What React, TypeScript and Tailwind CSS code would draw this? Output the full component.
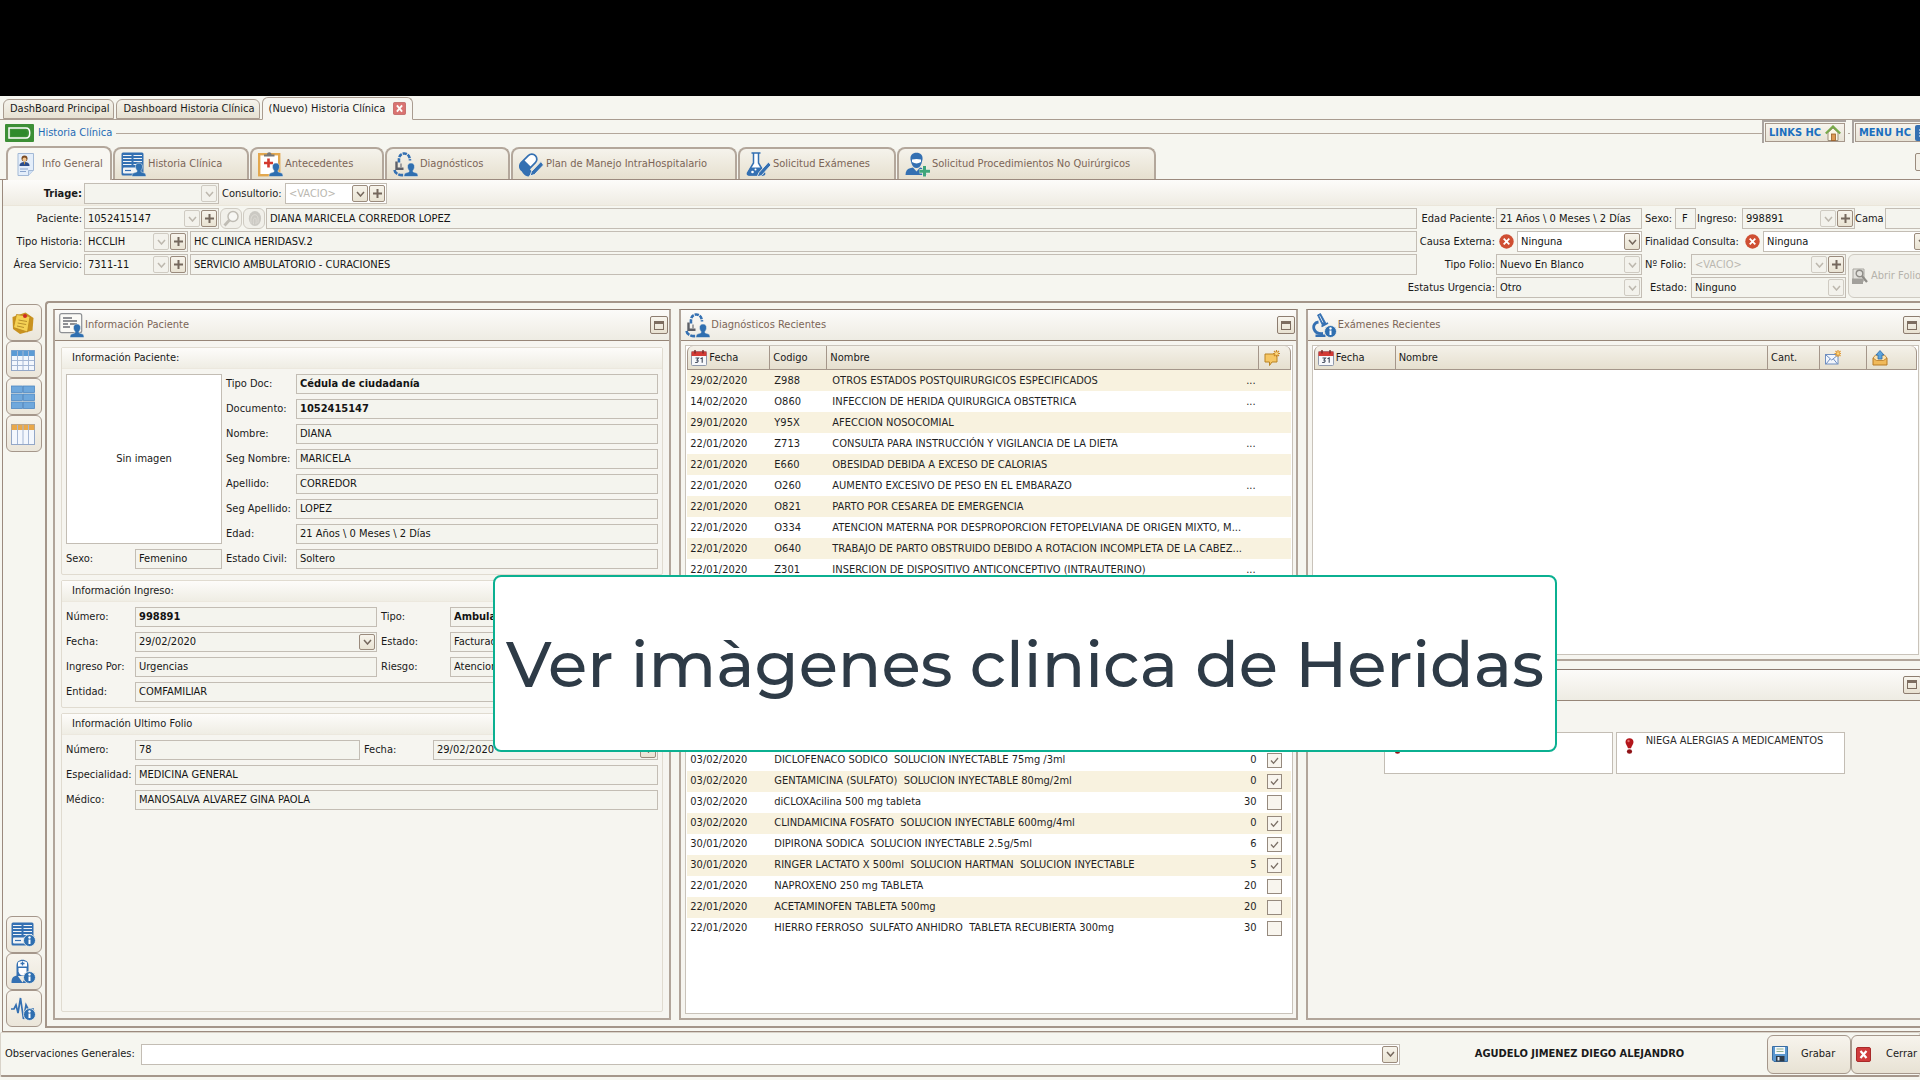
import React, { useId } from "react";
import type { ReactNode } from "react";

const BLUE = "#3470b2";

/* ---------- icons ---------- */

function Person({ x = 0, y = 0, s = 1 }: { x?: number; y?: number; s?: number }) {
  return (
    <g transform={`translate(${x} ${y}) scale(${s})`} fill="#2f6fb0" stroke="#f4f2ea" strokeWidth="0.5">
      <path d="M6 0c2.600 0 3.800 1.800 3.500 4.200-.1 1.500-.8 2.600-1.500 3.400v1.200l3.600 1.300c1 .5 1.400 1.400 1.400 3.400H-1c0-2 .4-2.900 1.400-3.400L4 8.800V7.600C3.300 6.800 2.600 5.700 2.500 4.200 2.200 1.800 3.400 0 6 0Z" />
    </g>
  );
}

function InfoBadge({ x, y }: { x: number; y: number }) {
  return (
    <g transform={`translate(${x} ${y})`}>
      <circle cx="6" cy="6" r="6" fill="#2f6fb0" stroke="#f4f2ea" strokeWidth="0.8" />
      <circle cx="6" cy="3" r="1.200" fill="#fff" />
      <path d="M4.600 5H7v4.600H5V5Z" fill="#fff" />
    </g>
  );
}

const icon25 = "h-[25px] w-[25px] shrink-0";

function IdDocIcon() {
  return (
    <svg viewBox="0 0 20 25" className="h-[25px] w-5 shrink-0" aria-hidden="true">
      <path d="M2 1.500h15.500V18l-5 5.500H2Z" fill="#e4eefa" stroke="#a3b9d6" />
      <circle cx="8.500" cy="6.500" r="3" fill="#7a4a22" />
      <circle cx="8.500" cy="7.500" r="2" fill="#f2c58e" />
      <path d="M3.500 14c0-3 2-4 5-4s5 1 5 4Z" fill="#2c4d8c" />
      <path d="M7.700 10h1.600l-.8 3Z" fill="#d9a13c" />
      <path d="M4 17h8M4 19.500h6" stroke="#8aa4cc" />
      <path d="M12.500 23.500v-5h5" fill="#cfe0f4" stroke="#a3b9d6" />
    </svg>
  );
}

function Ledger() {
  return (
    <g>
      <rect x="0.500" y="0.500" width="22" height="23" rx="1.500" fill={BLUE} />
      <path d="M2 3.500h8.500M2 6.500h8.500M2 9.500h8.500M2 12.500h8.500M12.500 3.500H21M12.500 6.500H21M12.500 9.500H21M12.500 12.500H21" stroke="#f1f3f5" strokeWidth="1.100" />
      <rect x="2" y="15.500" width="14" height="6" rx="1" fill="#f1f3f5" />
      <path d="M4 18.500h6" stroke={BLUE} strokeWidth="1.200" />
    </g>
  );
}

function HistoryIcon() {
  return (
    <svg viewBox="0 0 25 25" className={icon25} aria-hidden="true">
      <Ledger />
      <Person x={12} y={11} />
    </svg>
  );
}

function ClipboardIcon() {
  return (
    <svg viewBox="0 0 25 25" className={icon25} aria-hidden="true">
      <rect x="1.200" y="2.200" width="20" height="21" fill="#fff" stroke="#e3a84f" strokeWidth="2.400" />
      <path d="M6 4.500V2.500h3C9 1 10 .3 11.200.3S13.500 1 13.500 2.500h3v2Z" fill="#777" />
      <path d="M10.500 6.500v9M6 11h9" stroke="#d3382c" strokeWidth="2.600" />
      <Person x={12} y={11} />
    </svg>
  );
}

function DiagnosisIcon() {
  return (
    <svg viewBox="0 0 25 25" className={icon25} aria-hidden="true">
      <path d="M6 10.500C5.500 5 7 1.800 10.800 1.500S16.800 4 17 8.500" fill="none" stroke={BLUE} strokeWidth="2.600" strokeDasharray="4.200 1" />
      <path d="M3.500 9.500v7.300h7" fill="none" stroke="#5d5f66" strokeWidth="2.400" />
      <path d="M8 11.500v4" stroke="#8d8f93" strokeWidth="1.600" />
      <path d="M1.500 18c.5 3.800 5 5.500 9.500 5" fill="none" stroke={BLUE} strokeWidth="2.600" strokeDasharray="5 1" />
      <Person x={12} y={11} />
    </svg>
  );
}

function PillIcon() {
  return (
    <svg viewBox="0 0 25 25" className={icon25} aria-hidden="true">
      <g transform="rotate(-45 10 10)">
        <rect x="-1" y="5" width="20" height="10" rx="5" fill="#fff" stroke={BLUE} strokeWidth="1.700" />
        <path d="M8 5H4a5 5 0 0 0 0 10h4Z" fill={BLUE} />
      </g>
      <path d="M2 17c1 4 3.500 7 7.500 7.500l4-4-4-5Z" fill={BLUE} />
      <path d="m22 9.500-9.500 10-1.500 4.500 4.500-1.500 9-9.500Z" fill={BLUE} stroke="#f1efe6" strokeWidth="0.900" />
    </svg>
  );
}

function FlaskIcon() {
  return (
    <svg viewBox="0 0 25 25" className={icon25} aria-hidden="true">
      <path d="M5.500 1h9M7.500 1v10L1.500 21c-.3 1.300.3 2 1.500 2h14c1.200 0 1.800-.7 1.500-2L12.500 11V1" fill="#fff" stroke={BLUE} strokeWidth="1.500" />
      <path d="M4.500 15.500h11l3 6-2 2h-14l-1.500-2Z" fill={BLUE} />
      <circle cx="6.500" cy="20" r="1.300" fill="#fff" />
      <circle cx="9.500" cy="17.500" r="1" fill="#fff" />
      <path d="m22.500 10-9.500 10.500-2 4.500 4.500-1.500L25 13Z" fill={BLUE} stroke="#f1efe6" strokeWidth="0.900" />
    </svg>
  );
}

function SurgeonIcon() {
  return (
    <svg viewBox="0 0 25 25" className={icon25} aria-hidden="true">
      <path d="M5.500 7.500C5 3 7.500.7 11.500.7S18 3 17.500 7.500l-1 4c-.8 2.500-2.500 4.500-5 4.500s-4.200-2-5-4.500Z" fill={BLUE} />
      <path d="M7 7.500c3-.8 6-.8 9 0v2.600c-1.500.9-3 1.400-4.500 1.400S8.500 11 7 10.100Z" fill="#fff" />
      <path d="M.5 23c0-4 1.500-6 4.500-6.800l3-.8 3.500 4 3.500-4 3 .8c3 .8 4 2.800 4 6.800Z" fill={BLUE} />
      <path d="M19.500 14v10.500M14.500 19.200H25" stroke="#f1efe6" strokeWidth="4.600" />
      <path d="M19.500 14v10.500M14.500 19.200H25" stroke="#3fa67a" strokeWidth="3" />
    </svg>
  );
}

function NurseIcon() {
  return (
    <svg viewBox="0 0 25 25" className={icon25} aria-hidden="true">
      <path d="M5.500 17V6.500C5.500 3 8 .8 11.500.8S17.500 3 17.500 6.500V17Z" fill={BLUE} />
      <path d="M7 3.500C9.500 1.500 13.500 1.500 16 3.500v4H7Z" fill="#fff" />
      <path d="M11.500 2.500v4M9.500 4.500h4" stroke={BLUE} strokeWidth="1.300" />
      <path d="M7.500 9h8v3.500c-.8 2.500-2.200 4-4 4s-3.200-1.500-4-4Z" fill="#fff" />
      <path d="M.5 24c0-5 1.500-7 6-7.500l5 7 3-5 2 5.500Z" fill={BLUE} />
      <InfoBadge x={12.500} y={12.500} />
    </svg>
  );
}

function PulseIcon() {
  return (
    <svg viewBox="0 0 25 25" className={icon25} aria-hidden="true">
      <path d="M0 13h3l2-4 2 8L9.500 2l3 21 2.500-14 2 4h6" fill="none" stroke={BLUE} strokeWidth="1.700" />
      <InfoBadge x={12.500} y={12.500} />
    </svg>
  );
}

function LedgerInfoIcon() {
  return (
    <svg viewBox="0 0 25 25" className={icon25} aria-hidden="true">
      <Ledger />
      <InfoBadge x={12.500} y={12.500} />
    </svg>
  );
}

function PatientCardIcon() {
  return (
    <svg viewBox="0 0 25 25" className={icon25} aria-hidden="true">
      <rect x="0.700" y="0.700" width="22" height="19" rx="2" fill="#fbfaf6" stroke="#8d8f93" strokeWidth="1.200" />
      <path d="M4 5h9M4 8h14M4 11h5M11 11h7M4 14h7" stroke="#6c6e74" strokeWidth="1.300" />
      <Person x={12} y={11} />
    </svg>
  );
}

function MicroscopeIcon() {
  return (
    <svg viewBox="0 0 25 25" className={icon25} aria-hidden="true">
      <path d="m5.500 2 3-1.500 5.500 10-3.500 2Z" fill={BLUE} stroke={BLUE} strokeWidth="0.800" />
      <path d="m7.500 2.500 3.500 7" stroke="#dfe7f0" strokeWidth="0.900" />
      <path d="M6.500 9C2.500 9.500 1 13 2 16s4 5 9 4.500" fill="none" stroke={BLUE} strokeWidth="2.800" />
      <path d="M3.500 24v-2.500h10V24Z" fill={BLUE} />
      <path d="M9.500 13.500 16 10" stroke={BLUE} strokeWidth="1.800" />
      <InfoBadge x={12.500} y={12.500} />
    </svg>
  );
}

function CalendarIcon() {
  return (
    <svg viewBox="0 0 16 16" className="h-4 w-4 shrink-0" aria-hidden="true">
      <rect x="0.500" y="1.500" width="15" height="14" rx="1" fill="#f7f8fb" stroke="#8f98ab" />
      <path d="M.5 1.500h15v4.500H.5Z" fill="#d33a35" />
      <path d="M4 0v3.500M12 0v3.500" stroke="#7a2522" strokeWidth="1.400" />
      <path d="M4.500 8h3l-1.500 2c1.500 0 2 2.800-1.800 2.500M9.500 8.800l1.700-.9v4.800" fill="none" stroke="#3d4658" strokeWidth="1.100" />
    </svg>
  );
}

function NoteBubbleIcon() {
  return (
    <svg viewBox="0 0 16 16" className="h-4 w-4 shrink-0" aria-hidden="true">
      <path d="M1 4h12v8H8L5.500 15.500V12H1Z" fill="#f6c765" stroke="#b98324" />
      <path d="M12.500 0v7M9 3.500h7M10 1l5 5M15 1l-5 5" stroke="#c98a2b" strokeWidth="1.200" />
      <circle cx="12.500" cy="3.500" r="1.600" fill="#ffd87a" />
    </svg>
  );
}

function MailNewIcon() {
  return (
    <svg viewBox="0 0 16 16" className="h-4 w-4 shrink-0" aria-hidden="true">
      <rect x="0.500" y="4.500" width="12.500" height="9.500" fill="#f2f6fc" stroke="#6f8fc0" />
      <path d="m1 5 5.700 5L13 5M1 14l4-5M12.500 14l-4-5" fill="none" stroke="#6f8fc0" />
      <path d="M13 0v7M9.500 3.500h7M10.500 1l5 5M15.500 1l-5 5" stroke="#e09a35" strokeWidth="1.200" />
      <circle cx="13" cy="3.500" r="1.300" fill="#ffd87a" />
    </svg>
  );
}

function OutboxIcon() {
  return (
    <svg viewBox="0 0 16 16" className="h-4 w-4 shrink-0" aria-hidden="true">
      <path d="M1 8h14v7H1Z" fill="#f0b95a" stroke="#b77a25" />
      <path d="m1 8 2.500-3h9L15 8l-3.500 2.500h-7Z" fill="#fbe2ae" stroke="#b77a25" strokeWidth="0.800" />
      <path d="m8 .5 4 4.500h-2v4H6V5H4Z" fill="#5aa3dd" stroke="#2f6aa6" strokeWidth="0.800" />
    </svg>
  );
}

function StickyIcon() {
  return (
    <svg viewBox="0 0 24 24" className="h-6 w-6" aria-hidden="true">
      <path d="m1.500 6 13-4.500L22.500 7l-1 12.500L9 23l-7-5Z" fill="#c9921f" />
      <path d="m5.500 3.500 13.500 2-2.500 15.500-14-4.500Z" fill="#f5d154" stroke="#b9851d" strokeWidth="0.800" />
      <path d="m7.500 9 8.500 1.500M6.700 12l8.500 1.500M6 15l7 1.500" stroke="#b9902d" />
      <circle cx="14" cy="5" r="2" fill="#cf2a24" />
    </svg>
  );
}

function GridIcon({ head, dense }: { head: string; dense?: boolean }) {
  return (
    <svg viewBox="0 0 24 22" className="h-[22px] w-6" aria-hidden="true">
      <rect x="0.500" y="1.500" width="23" height="20" fill="#f3f7fd" stroke="#93a7c7" />
      <rect x="0.500" y="1.500" width="23" height="5.500" fill={head} />
      <path d="M6.500 2v19M12 2v19M17.500 2v19" stroke="#a5b7d4" />
      {dense && <path d="M1 11.500h22M1 16.500h22" stroke="#a5b7d4" />}
    </svg>
  );
}

function TilesIcon() {
  return (
    <svg viewBox="0 0 24 24" className="h-6 w-6" aria-hidden="true">
      {[1, 9, 17].map((y) => (
        <g key={y} fill="#6fa8dc" stroke="#4f88c2" strokeWidth="0.800">
          <rect x="0.500" y={y} width="11" height="6.500" />
          <rect x="12.500" y={y} width="11" height="6.500" />
        </g>
      ))}
    </svg>
  );
}

function ErrorIcon() {
  return (
    <svg viewBox="0 0 15 15" className="h-[15px] w-[15px] shrink-0" aria-hidden="true">
      <circle cx="7.500" cy="7.500" r="7.200" fill="#cf4f33" />
      <path d="m4.700 4.700 5.600 5.600M10.300 4.700l-5.600 5.600" stroke="#fff" strokeWidth="1.800" />
    </svg>
  );
}

function AlertIcon() {
  return (
    <svg viewBox="0 0 9 16" className="h-4 w-[9px] shrink-0" aria-hidden="true">
      <path d="M4.500.3c2.400 0 4 1.500 4 3.800 0 2.200-1.800 3.800-2.500 6.200H3C2.300 7.900.5 6.300.5 4.100c0-2.300 1.600-3.800 4-3.800Z" fill="#b3161b" />
      <circle cx="3.500" cy="3" r="1.200" fill="#e36a68" />
      <ellipse cx="4.500" cy="13.500" rx="2.600" ry="2.200" fill="#8f1216" />
    </svg>
  );
}

function HouseIcon() {
  return (
    <svg viewBox="0 0 16 16" className="h-4 w-4" aria-hidden="true">
      <path d="M3 7.500v8h10v-8L8 3Z" fill="#fbf6e6" stroke="#9b8f7a" />
      <path d="M.8 8.500 8 1.500l7.200 7" fill="none" stroke="#78a94a" strokeWidth="2.200" />
      <rect x="6.500" y="9" width="4" height="6.500" fill="#dd9a55" stroke="#9a5e27" strokeWidth="0.800" />
    </svg>
  );
}

function FloppyIcon() {
  return (
    <svg viewBox="0 0 16 16" className="h-4 w-4" aria-hidden="true">
      <path d="M.5.500h15v15H2l-1.500-1.500Z" fill="#5a97cf" stroke="#3b6ea3" />
      <rect x="3" y="1" width="10" height="7" fill="#f6f9fc" />
      <path d="M4.500 3h7M4.500 5.500h7" stroke="#8fb08f" />
      <rect x="4" y="10" width="8.500" height="5.500" fill="#2e3b49" />
      <rect x="5.500" y="11" width="2" height="3.500" fill="#dfe6ee" />
    </svg>
  );
}

function RedCloseIcon({ className }: { className: string }) {
  return (
    <svg viewBox="0 0 15 15" className={className} aria-hidden="true">
      <rect x="0.500" y="0.500" width="14" height="14" rx="1.500" fill="#cf3b3b" stroke="#a82a2a" />
      <path d="m4.500 4 6 7M10.500 4l-6 7" stroke="#fff" strokeWidth="2.200" />
    </svg>
  );
}

function ChevronDown() {
  return (
    <svg viewBox="0 0 9 6" className="h-1.5 w-[9px]" aria-hidden="true">
      <path d="m1 1 3.500 4L8 1" fill="none" stroke="currentColor" strokeWidth="1.500" />
    </svg>
  );
}

function PlusGlyph() {
  return (
    <svg viewBox="0 0 9 9" className="h-[9px] w-[9px]" aria-hidden="true">
      <path d="M4.500 0v9M0 4.500h9" stroke="currentColor" strokeWidth="2" />
    </svg>
  );
}

/* ---------- form parts ---------- */

const miniOn =
  "flex w-4 shrink-0 items-center justify-center rounded-xs border border-[#9a8b7d] bg-linear-to-b from-[#f7f4ec] to-[#e9e3d3] text-[#75685d]";
const miniOff =
  "flex w-4 shrink-0 items-center justify-center rounded-xs border border-[#cfcbc2] bg-[#f3f2ec] text-[#bdb8ae]";

type BoxProps = {
  id?: string;
  name?: string;
  value: string;
  className?: string;
  bold?: boolean;
  faded?: boolean;
  white?: boolean;
  drop?: "on" | "off";
  plus?: boolean;
};

function Box({ id, name, value, className = "", bold, faded, white, drop, plus }: BoxProps) {
  return (
    <div className={`flex min-w-0 gap-px border border-[#c3bdb4] p-px ${white ? "bg-white" : "bg-[#f4f4ee]"} ${className}`}>
      <input
        id={id}
        aria-label={name}
        readOnly
        value={value}
        className={`min-w-0 flex-1 bg-transparent px-0.5 outline-none ${bold ? "font-bold" : ""} ${faded ? "text-[#bab7b0]" : "text-[#141414]"}`}
      />
      {drop && (
        <button type="button" aria-label="Desplegar" disabled={drop === "off"} className={drop === "on" ? miniOn : miniOff}>
          <ChevronDown />
        </button>
      )}
      {plus && (
        <button type="button" aria-label="Agregar" className={miniOn}>
          <PlusGlyph />
        </button>
      )}
    </div>
  );
}

function Choice({ id, value, className = "", enabled }: { id: string; value: string; className?: string; enabled?: boolean }) {
  return (
    <div className={`relative flex min-w-0 border border-[#c3bdb4] p-px ${enabled ? "bg-white" : "bg-[#f4f4ee]"} ${className}`}>
      <select id={id} disabled={!enabled} className="min-w-0 flex-1 appearance-none bg-transparent px-0.5 text-[#141414] opacity-100 outline-none">
        <option>{value}</option>
      </select>
      <span className={`pointer-events-none ${enabled ? miniOn : miniOff}`}>
        <ChevronDown />
      </span>
    </div>
  );
}

function Lab({ htmlFor, className = "", children }: { htmlFor: string; className?: string; children: ReactNode }) {
  return (
    <label htmlFor={htmlFor} className={`flex shrink-0 items-center whitespace-nowrap ${className}`}>
      {children}
    </label>
  );
}

/** Label and box as two neighbouring cells of the surrounding grid. */
function Pair({ label, wide, ...box }: BoxProps & { label: string; wide?: boolean }) {
  const id = useId();
  return (
    <>
      <Lab htmlFor={id} className="pl-1 first:pl-0">
        {label}
      </Lab>
      <Box id={id} {...box} className={wide ? "col-span-3" : ""} />
    </>
  );
}

/* ---------- top ---------- */

function DocTab({ label, active }: { label: string; active?: boolean }) {
  return (
    <div
      className={`flex items-center rounded-t-md border border-[#a99c90] ${
        active ? "z-10 -mb-px h-[23px] border-b-[#f6f5f0] bg-[#f7f6f1] px-1.5" : "h-5 bg-linear-to-b from-[#f5f3ec] to-[#e7e2d3] pr-1 pl-1.5"
      }`}
    >
      <button type="button" role="tab" aria-selected={!!active} className="whitespace-nowrap">
        {label}
      </button>
      {active && (
        <button type="button" aria-label="Cerrar pestaña" className="ml-2 opacity-70">
          <RedCloseIcon className="h-[13px] w-[13px]" />
        </button>
      )}
    </div>
  );
}

const sections = [
  { label: "Info General", icon: <IdDocIcon />, width: "w-[106px]", pad: "pl-2 gap-1.5", active: true },
  { label: "Historia Clínica", icon: <HistoryIcon />, width: "w-[136px]", pad: "pl-1.5 gap-0.5" },
  { label: "Antecedentes", icon: <ClipboardIcon />, width: "w-[134px]", pad: "pl-1.5 gap-0.5" },
  { label: "Diagnósticos", icon: <DiagnosisIcon />, width: "w-[125px]", pad: "pl-1.5 gap-0.5" },
  { label: "Plan de Manejo IntraHospitalario", icon: <PillIcon />, width: "w-[226px]", pad: "pl-1.5 gap-0.5" },
  { label: "Solicitud Exámenes", icon: <FlaskIcon />, width: "w-[158px]", pad: "pl-1.5 gap-0.5" },
  { label: "Solicitud Procedimientos No Quirúrgicos", icon: <SurgeonIcon />, width: "w-[259px]", pad: "pl-1.5 gap-0.5" },
];

function SectionTabs() {
  return (
    <nav role="tablist" className="flex h-[33px] items-end gap-px border-b border-[#9b8a7e] pl-1.5">
      {sections.map((s) => (
        <button
          key={s.label}
          type="button"
          role="tab"
          aria-selected={!!s.active}
          className={`flex h-8 shrink-0 items-center whitespace-nowrap rounded-t-lg border-2 border-b-0 border-[#b3a79b] text-[#7b6557] ${s.width} ${s.pad} ${
            s.active ? "z-10 -mb-px h-[34px] bg-[#f8f7f2]" : "bg-linear-to-b from-[#f5f3ec] to-[#e6e0cf]"
          }`}
        >
          {s.icon}
          {s.label}
        </button>
      ))}
      <button type="button" aria-label="Contraer" className="-mr-2.5 mb-2 ml-auto h-[18px] w-[15px] shrink-0 rounded-xs border border-[#9a8b7d] bg-[#f3f0e7]" />
    </nav>
  );
}

function PatientForm() {
  const id = useId();
  const f = (n: string) => id + n;
  const left = "w-[81px] justify-end pr-0.5";
  const right = "w-[79px] justify-end pr-px";
  return (
    <section className="pb-[3px]">
      <div className="mb-0.5 flex h-[26px] items-center border-b border-[#ebe6da] bg-linear-to-b from-[#fdfcfa] to-[#efece3] pt-0.5">
        <Lab htmlFor={f("tri")} className={`${left} font-bold`}>Triage:</Lab>
        <Box id={f("tri")} value="" drop="off" className="h-[21px] w-[135px]" />
        <Lab htmlFor={f("con")} className="w-[66px] pl-[3px]">Consultorio:</Lab>
        <Box id={f("con")} value="<VACIO>" faded white drop="on" plus className="h-[21px] w-[102px]" />
      </div>
      <div className="flex">
        <div className="flex min-w-0 flex-1 flex-col gap-0.5">
          <div className="flex h-[21px] gap-px">
            <Lab htmlFor={f("pac")} className="w-20 justify-end pr-px">Paciente:</Lab>
            <Box id={f("pac")} value="1052415147" drop="off" plus className="w-[135px]" />
            <button type="button" aria-label="Buscar" disabled className="flex w-[22px] shrink-0 items-center justify-center rounded-md border border-[#cfcbc2] bg-[#f1f0ea]">
              <svg viewBox="0 0 18 18" className="h-[18px] w-[18px] shrink-0" aria-hidden="true">
                <circle cx="11" cy="6.500" r="5" fill="#f7f7f4" stroke="#bfbcb4" strokeWidth="1.500" />
                <path d="m7.500 10-5 5.500" stroke="#bfbcb4" strokeWidth="2.800" />
              </svg>
            </button>
            <button type="button" aria-label="Huella" disabled className="flex w-[22px] shrink-0 items-center justify-center rounded-md border border-[#cfcbc2] bg-[#f1f0ea]">
              <svg viewBox="0 0 16 18" className="h-[17px] w-4 shrink-0" aria-hidden="true">
                <ellipse cx="9" cy="9" rx="6.500" ry="8" fill="#cbc9c3" />
                <path d="M5 14c-1-6 1-9 4-9s4 4 3 9M7.500 15c-.5-4 0-6.500 1.500-6.500s1.500 3 1 6.500" fill="none" stroke="#dedcd6" />
              </svg>
            </button>
            <Box name="Nombre del paciente" value="DIANA MARICELA CORREDOR LOPEZ" className="flex-1" />
          </div>
          <div className="flex h-[21px]">
            <Lab htmlFor={f("tip")} className={left}>Tipo Historia:</Lab>
            <Box id={f("tip")} value="HCCLIH" drop="off" plus className="mr-0.5 w-[104px]" />
            <Box name="Descripción de historia" value="HC CLINICA HERIDASV.2" className="flex-1" />
          </div>
          <div className="flex h-[21px]">
            <Lab htmlFor={f("are")} className={left}>Área Servicio:</Lab>
            <Box id={f("are")} value="7311-11" drop="off" plus className="mr-0.5 w-[104px]" />
            <Box name="Descripción de servicio" value="SERVICIO AMBULATORIO - CURACIONES" className="flex-1" />
          </div>
        </div>
        <div className="-mr-3 flex w-[515px] shrink-0 flex-col gap-0.5">
          <div className="flex h-[21px]">
            <Lab htmlFor={f("eda")} className={right}>Edad Paciente:</Lab>
            <Box id={f("eda")} value="21 Años \ 0 Meses \ 2 Días" className="w-[146px]" />
            <Lab htmlFor={f("sex")} className="w-[33px] pl-[3px]">Sexo:</Lab>
            <Box id={f("sex")} value="F" className="w-[21px] pl-1" />
            <Lab htmlFor={f("ing")} className="w-[46px] pl-px">Ingreso:</Lab>
            <Box id={f("ing")} value="998891" drop="off" plus className="w-[113px]" />
            <Lab htmlFor={f("cam")} className="w-[30px]">Cama</Lab>
            <Box id={f("cam")} value="" className="flex-1" />
          </div>
          <div className="flex h-[21px]">
            <Lab htmlFor={f("cau")} className={right}>Causa Externa:</Lab>
            <span className="flex w-[21px] items-center pl-[3px]"><ErrorIcon /></span>
            <Choice id={f("cau")} value="Ninguna" enabled className="w-[125px]" />
            <Lab htmlFor={f("fin")} className="w-[99px] pl-[3px]">Finalidad Consulta:</Lab>
            <span className="flex w-[22px] items-center pl-1"><ErrorIcon /></span>
            <Choice id={f("fin")} value="Ninguna" enabled className="flex-1" />
          </div>
          <div className="flex">
            <div className="flex flex-col gap-0.5">
              <div className="flex h-[21px]">
                <Lab htmlFor={f("tfo")} className={right}>Tipo Folio:</Lab>
                <Choice id={f("tfo")} value="Nuevo En Blanco" className="w-[146px]" />
                <Lab htmlFor={f("nfo")} className="w-[49px] pl-[3px]">Nº Folio:</Lab>
                <Box id={f("nfo")} value="<VACIO>" faded drop="off" plus className="w-[155px]" />
              </div>
              <div className="flex h-[21px]">
                <Lab htmlFor={f("est")} className={right}>Estatus Urgencia:</Lab>
                <Choice id={f("est")} value="Otro" className="w-[146px]" />
                <Lab htmlFor={f("esd")} className="w-[49px] justify-end pr-1">Estado:</Lab>
                <Choice id={f("esd")} value="Ninguno" className="w-[155px]" />
              </div>
            </div>
            <button type="button" disabled className="ml-0.5 flex flex-1 items-center gap-[3px] whitespace-nowrap rounded-md border border-[#cfcbc2] bg-[#f1f0ea] pl-0.5 text-[#b5b2ab]">
              <svg viewBox="0 0 17 17" className="h-[17px] w-[17px] shrink-0" aria-hidden="true">
                <path d="M2 1h11v12H2Z" fill="#e3e2dd" stroke="#a9a7a1" />
                <circle cx="8.500" cy="5.500" r="3.300" fill="none" stroke="#8f8d88" strokeWidth="1.400" />
                <path d="m11 8 5 6" stroke="#8f8d88" strokeWidth="2.200" />
                <path d="M1 10.500h11v5.500H1Z" fill="#a2a09b" />
              </svg>
              Abrir Folio
            </button>
          </div>
        </div>
      </div>
    </section>
  );
}

/* ---------- panels ---------- */

function Panel({ title, icon, children, className = "" }: { title?: string; icon?: ReactNode; children: ReactNode; className?: string }) {
  return (
    <section className={`flex min-h-0 min-w-0 flex-col border-2 border-t-[1px] border-[#b1a59a] border-t-[#8b7a6f] bg-[#f6f5f0] ${className}`}>
      <header className="flex h-[31px] shrink-0 items-center gap-px border-b border-[#978678] bg-linear-to-b from-[#fcfbf9] to-[#eeece3] pr-px pl-1 text-[#7b6557]">
        {icon}
        <h2>{title}</h2>
        <button type="button" aria-label="Maximizar" className="ml-auto flex h-[18px] w-[18px] items-center justify-center rounded-xs border border-[#8d7d70] bg-linear-to-b from-[#f8f5ee] to-[#e8e1d1]">
          <span className="h-[9px] w-2.5 border border-t-[3px] border-[#7d6d60]" />
        </button>
      </header>
      {children}
    </section>
  );
}

function Group({ title, children, className = "" }: { title: string; children: ReactNode; className?: string }) {
  return (
    <section className={`rounded-xs border border-[#e0dbd0] ${className}`}>
      <h3 className="flex h-[21px] items-center border-b border-[#ece8de] bg-linear-to-b from-[#fdfcfa] to-[#efede4] pl-2.5">{title}</h3>
      {children}
    </section>
  );
}

function PatientPanel() {
  const sexo = useId();
  const civil = useId();
  const rows: [string, string, boolean?][] = [
    ["Tipo Doc:", "Cédula de ciudadanía", true],
    ["Documento:", "1052415147", true],
    ["Nombre:", "DIANA"],
    ["Seg Nombre:", "MARICELA"],
    ["Apellido:", "CORREDOR"],
    ["Seg Apellido:", "LOPEZ"],
    ["Edad:", "21 Años \\ 0 Meses \\ 2 Días"],
  ];
  const grid = "grid auto-rows-[20px] gap-y-[5px] px-1 py-[5px]";
  return (
    <Panel title="Información Paciente" icon={<PatientCardIcon />}>
      <div className="flex flex-1 flex-col gap-[5px] p-1.5">
        <Group title="Información Paciente:">
          <div className={`${grid} grid-cols-[69px_87px_74px_minmax(0,1fr)]`}>
            <div className="col-span-2 row-span-7 flex items-center justify-center border border-[#c3bdb4] bg-white">Sin imagen</div>
            {rows.map(([label, value, bold]) => (
              <Pair key={label} label={label} value={value} bold={bold} />
            ))}
            <Lab htmlFor={sexo}>Sexo:</Lab>
            <Box id={sexo} value="Femenino" />
            <Lab htmlFor={civil} className="pl-1">Estado Civil:</Lab>
            <Box id={civil} value="Soltero" />
          </div>
        </Group>
        <Group title="Información Ingreso:">
          <div className={`${grid} grid-cols-[69px_242px_73px_minmax(0,1fr)]`}>
            <Pair label="Número:" value="998891" bold />
            <Pair label="Tipo:" value="Ambulatorio" bold />
            <div className="contents"><Pair label="Fecha:" value="29/02/2020" drop="on" /></div>
            <Pair label="Estado:" value="Facturado" />
            <div className="contents"><Pair label="Ingreso Por:" value="Urgencias" /></div>
            <Pair label="Riesgo:" value="Atencion" />
            <div className="contents"><Pair label="Entidad:" value="COMFAMILIAR" wide /></div>
          </div>
        </Group>
        <Group title="Información Ultimo Folio" className="flex-1">
          <div className={`${grid} grid-cols-[69px_225px_73px_minmax(0,1fr)]`}>
            <Pair label="Número:" value="78" />
            <Pair label="Fecha:" value="29/02/2020" drop="on" />
            <div className="contents"><Pair label="Especialidad:" value="MEDICINA GENERAL" wide /></div>
            <div className="contents"><Pair label="Médico:" value="MANOSALVA ALVAREZ GINA PAOLA" wide /></div>
          </div>
        </Group>
      </div>
    </Panel>
  );
}

const diagnoses: [string, string, string, boolean][] = [
  ["29/02/2020", "Z988", "OTROS ESTADOS POSTQUIRURGICOS ESPECIFICADOS", true],
  ["14/02/2020", "O860", "INFECCION DE HERIDA QUIRURGICA OBSTETRICA", true],
  ["29/01/2020", "Y95X", "AFECCION NOSOCOMIAL", false],
  ["22/01/2020", "Z713", "CONSULTA PARA INSTRUCCIÓN Y VIGILANCIA DE LA DIETA", true],
  ["22/01/2020", "E660", "OBESIDAD DEBIDA A EXCESO DE CALORIAS", false],
  ["22/01/2020", "O260", "AUMENTO EXCESIVO DE PESO EN EL EMBARAZO", true],
  ["22/01/2020", "O821", "PARTO POR CESAREA DE EMERGENCIA", false],
  ["22/01/2020", "O334", "ATENCION MATERNA POR DESPROPORCION FETOPELVIANA DE ORIGEN MIXTO, M...", false],
  ["22/01/2020", "O640", "TRABAJO DE PARTO OBSTRUIDO DEBIDO A ROTACION INCOMPLETA DE LA CABEZ...", false],
  ["22/01/2020", "Z301", "INSERCION DE DISPOSITIVO ANTICONCEPTIVO (INTRAUTERINO)", true],
];

const medicines: [string, string, number, boolean][] = [
  ["03/02/2020", "DICLOFENACO SODICO  SOLUCION INYECTABLE 75mg /3ml", 0, true],
  ["03/02/2020", "GENTAMICINA (SULFATO)  SOLUCION INYECTABLE 80mg/2ml", 0, true],
  ["03/02/2020", "diCLOXAcilina 500 mg tableta", 30, false],
  ["03/02/2020", "CLINDAMICINA FOSFATO  SOLUCION INYECTABLE 600mg/4ml", 0, true],
  ["30/01/2020", "DIPIRONA SODICA  SOLUCION INYECTABLE 2.5g/5ml", 6, true],
  ["30/01/2020", "RINGER LACTATO X 500ml  SOLUCION HARTMAN  SOLUCION INYECTABLE", 5, true],
  ["22/01/2020", "NAPROXENO 250 mg TABLETA", 20, false],
  ["22/01/2020", "ACETAMINOFEN TABLETA 500mg", 20, false],
  ["22/01/2020", "HIERRO FERROSO  SULFATO ANHIDRO  TABLETA RECUBIERTA 300mg", 30, false],
];

const th = "h-6 border-r border-b border-[#a4968a] p-0 pl-[3px] text-left font-normal";
const headRow = "bg-linear-to-b from-[#f4f1e9] to-[#e5dfce]";
const tableFrame = "m-1 mr-[3px] flex-1 overflow-hidden border border-[#c9c3ba] bg-white px-px";

function DiagnosesPanel() {
  return (
    <Panel title="Diagnósticos Recientes" icon={<DiagnosisIcon />} className="flex-1">
      <div className={tableFrame}>
        <table className="w-full table-fixed border-separate border-spacing-0">
          <thead>
            <tr className={headRow}>
              <th className={`${th} w-[83px] rounded-tl-md border-l`}><span className="flex items-center gap-0.5"><CalendarIcon />Fecha</span></th>
              <th className={`${th} w-[57px]`}>Codigo</th>
              <th className={th}>Nombre</th>
              <th className={`${th} w-8 rounded-tr-md`}><span className="flex pl-0.5"><NoteBubbleIcon /></span></th>
            </tr>
          </thead>
          <tbody>
            {diagnoses.map(([date, code, name, more], i) => (
              <tr key={i} className="h-[21px] text-[#1f1f1f] odd:bg-[#f8f2df]">
                <td className="p-0 pl-[3px]">{date}</td>
                <td className="p-0 pl-1">{code}</td>
                <td className="p-0 pr-[3px] pl-[5px]">
                  <span className="flex justify-between whitespace-nowrap">
                    <span>{name}</span>
                    {more && <span>...</span>}
                  </span>
                </td>
                <td className="p-0" />
              </tr>
            ))}
          </tbody>
        </table>
      </div>
    </Panel>
  );
}

function MedicinesPanel() {
  return (
    <Panel className="flex-1">
      <div className={`${tableFrame} pt-11`}>
        <table className="w-full table-fixed border-separate border-spacing-0">
          <tbody>
            {medicines.map(([date, name, qty, done], i) => (
              <tr key={i} className="h-[21px] text-[#1f1f1f] even:bg-[#f8f2df]">
                <td className="w-[83px] p-0 pl-[3px]">{date}</td>
                <td className="p-0 pl-1 whitespace-pre">{name}</td>
                <td className="w-10 p-0 pr-0.5 text-right">{qty}</td>
                <td className="w-8 p-0">
                  <span className="relative mx-auto block h-[15px] w-[15px]">
                    <input type="checkbox" readOnly checked={done} aria-label={name} className="peer block h-[15px] w-[15px] appearance-none border border-[#968a7e] bg-[#f8f5ee]" />
                    <svg viewBox="0 0 15 15" className="pointer-events-none absolute inset-0 hidden h-[15px] w-[15px] peer-checked:block" aria-hidden="true">
                      <path d="m4 7.500 2.500 2.800L11 5" fill="none" stroke="#7c7167" strokeWidth="1.300" />
                    </svg>
                  </span>
                </td>
              </tr>
            ))}
          </tbody>
        </table>
      </div>
    </Panel>
  );
}

function ExamsPanel() {
  return (
    <Panel title="Exámenes Recientes" icon={<MicroscopeIcon />} className="flex-1">
      <div className={tableFrame}>
        <table className="w-full table-fixed border-separate border-spacing-0">
          <thead>
            <tr className={headRow}>
              <th className={`${th} w-[82px] rounded-tl-md border-l`}><span className="flex items-center gap-0.5"><CalendarIcon />Fecha</span></th>
              <th className={th}>Nombre</th>
              <th className={`${th} w-[52px]`}>Cant.</th>
              <th className={`${th} w-[47px]`}><span className="flex pl-0.5"><MailNewIcon /></span></th>
              <th className={`${th} w-[50px] rounded-tr-md`}><span className="flex pl-0.5"><OutboxIcon /></span></th>
            </tr>
          </thead>
        </table>
      </div>
    </Panel>
  );
}

function AlertsPanel() {
  const card = "flex h-[42px] w-[229px] shrink-0 gap-3 border border-[#c3bdb4] bg-white px-2";
  return (
    <Panel className="flex-1">
      <div className="flex gap-[3px] pt-[31px] pl-[76px]">
        <div className={card}>
          <span className="pt-[5px]"><AlertIcon /></span>
        </div>
        <div className={card}>
          <span className="pt-[5px]"><AlertIcon /></span>
          <p className="text-[#2b2b2b]">NIEGA ALERGIAS A MEDICAMENTOS</p>
        </div>
      </div>
    </Panel>
  );
}

const sideBtn =
  "flex h-[37px] w-9 shrink-0 items-center rounded-md border border-[#a5978b] bg-linear-to-b from-[#f7f4ed] to-[#ebe6da] pl-1";

function SideBar() {
  return (
    <aside className="flex w-[42px] shrink-0 flex-col items-start pt-[3px] pb-px pl-[3px]">
      <button type="button" aria-label="Notas" className={sideBtn}><StickyIcon /></button>
      <button type="button" aria-label="Tabla" className={sideBtn}><GridIcon head="#5b9bd5" dense /></button>
      <button type="button" aria-label="Mosaico" className={sideBtn}><TilesIcon /></button>
      <button type="button" aria-label="Columnas" className={sideBtn}><GridIcon head="#e9a84a" /></button>
      <button type="button" aria-label="Información de historia" className={`${sideBtn} mt-auto`}><LedgerInfoIcon /></button>
      <button type="button" aria-label="Información de enfermería" className={sideBtn}><NurseIcon /></button>
      <button type="button" aria-label="Signos vitales" className={sideBtn}><PulseIcon /></button>
    </aside>
  );
}

function Footer() {
  const id = useId();
  const btn = "flex h-[39px] w-[84px] shrink-0 items-center rounded-md border border-[#a5978b] bg-linear-to-b from-[#f7f4ed] to-[#e8e2d4] pl-1";
  return (
    <footer className="mb-[3px] flex h-[45px] items-center rounded-xs border border-b-2 border-[#d9d3c9] border-b-[#a5978b] pl-1">
      <Lab htmlFor={id} className="w-[136px]">Observaciones Generales:</Lab>
      <Box id={id} value="" white drop="on" className="h-[21px] flex-1" />
      <strong className="w-[367px] shrink-0 pr-2 text-center">AGUDELO JIMENEZ DIEGO ALEJANDRO</strong>
      <button type="button" className={`${btn} gap-[13px]`}><FloppyIcon />Grabar</button>
      <button type="button" className={`${btn} -mr-4 gap-[15px]`}><RedCloseIcon className="h-[15px] w-[15px]" />Cerrar</button>
    </footer>
  );
}

export default function App() {
  const linkBox = "shrink-0 border-t-2 border-l-2 border-[#a9a39f] h-[23px] p-px";
  const linkBtn = "flex h-full w-full items-center gap-1 whitespace-nowrap border border-[#a5978b] bg-linear-to-b from-[#f6f4ed] to-[#e8e3d6] pl-[3px] font-bold text-[#1b6fbf]";
  return (
    <div className="flex min-h-screen flex-col bg-black font-['DejaVu_Sans_Condensed','Noto_Sans',sans-serif] text-[11px] leading-4 text-[#1a1a1a]">
      <div className="h-24 shrink-0" />
      <div className="relative flex flex-1 flex-col overflow-hidden bg-[#f6f6f0]">
        <nav role="tablist" className="flex h-6 items-end gap-0.5 border-b border-[#a99c90] pl-[3px]">
          <DocTab label="DashBoard Principal" />
          <DocTab label="Dashboard Historia Clínica" />
          <DocTab label="(Nuevo) Historia Clínica" active />
        </nav>

        <div className="flex h-[27px] items-start pl-[5px]">
          <div className="flex h-[26px] flex-1 items-center">
            <svg viewBox="0 0 29 18" className="h-[18px] w-[29px] shrink-0" aria-hidden="true">
              <rect width="29" height="18" rx="1" fill="#3c8f36" />
              <path d="M4 4h17c5 0 5 10 0 10H4Z" fill="#3c8f36" stroke="#fff" strokeWidth="1.500" />
              <path d="M6 6h14c3 0 3 6 0 6H6Z" fill="#2f8a2c" />
            </svg>
            <h1 className="px-1 text-[#1f6cb5]">Historia Clínica</h1>
            <span className="h-px flex-1 bg-[#b3a79b]" />
          </div>
          <div className={`${linkBox} w-[84px]`}>
            <button type="button" className={linkBtn}>LINKS HC<HouseIcon /></button>
          </div>
          <span className="mx-0.5 mt-[13px] h-px w-0.5 bg-[#b3a79b]" />
          <div className={`${linkBox} -mr-4 w-[84px]`}>
            <button type="button" className={linkBtn}>
              MENU HC
              <svg viewBox="0 0 16 16" className="h-4 w-4 shrink-0" aria-hidden="true">
                <rect width="16" height="16" rx="2" fill={BLUE} />
                <path d="M4 5h8M4 8h8M4 11h8" stroke="#fff" />
              </svg>
            </button>
          </div>
        </div>

        <SectionTabs />

        <div className="ml-0.5 flex flex-1 flex-col border-b border-l border-[#9b8a7e]">
          <PatientForm />
          <div className="mb-[3px] flex flex-1">
            <SideBar />
            <main className="-mr-2 grid min-w-0 flex-1 grid-cols-3 gap-2 rounded-tl-sm border-2 border-[#a4968a] border-r-0 p-1.5 pr-1">
              <PatientPanel />
              <div className="flex min-w-0 flex-col gap-2">
                <DiagnosesPanel />
                <MedicinesPanel />
              </div>
              <div className="flex min-w-0 flex-col gap-2">
                <ExamsPanel />
                <AlertsPanel />
              </div>
            </main>
          </div>
        </div>

        <Footer />

        <div
          role="note"
          className="absolute top-[479px] left-[493px] z-20 flex h-[177px] w-[1064px] items-center justify-center whitespace-nowrap rounded-lg border-2 border-[#0bb091] bg-white font-['Montserrat','Inter',sans-serif] text-[64px] leading-none font-medium text-[#2e3b47]"
        >
          Ver imàgenes clinica de Heridas
        </div>
      </div>
    </div>
  );
}
